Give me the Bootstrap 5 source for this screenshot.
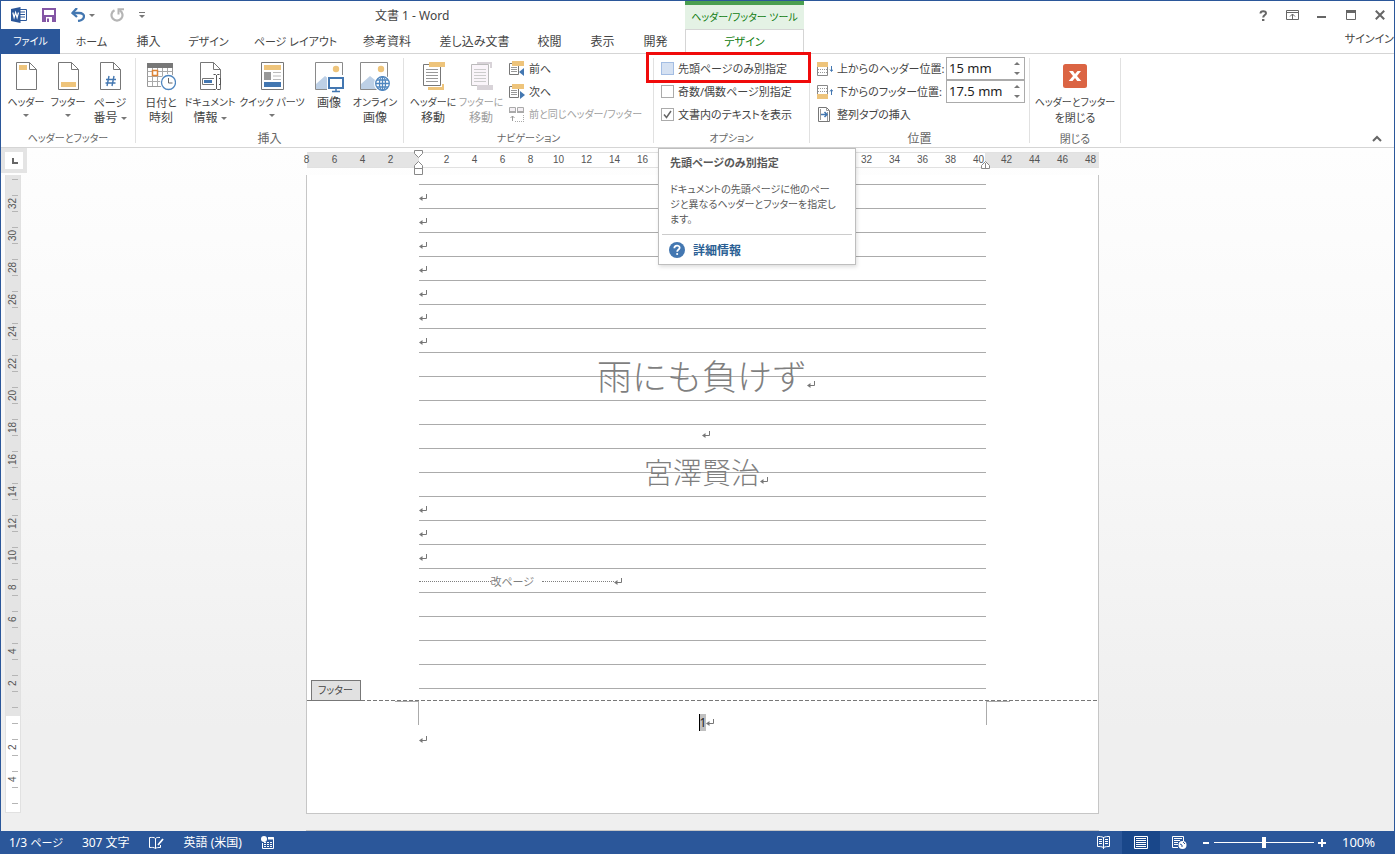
<!DOCTYPE html>
<html lang="ja">
<head>
<meta charset="utf-8">
<meta name="viewport" content="width=device-width, initial-scale=1">
<title>文書 1 - Word</title>
<link href="https://cdn.jsdelivr.net/npm/bootstrap@5.3.0/dist/css/bootstrap.min.css" rel="stylesheet">
<style>
:root{--blue:#2b579a;--line:#d5d5d5;--ink:#444}
body{font-family:"Noto Sans","Noto Sans CJK JP",sans-serif;font-size:12px;line-height:15px;color:var(--ink);font-feature-settings:"palt";background:#fff;border:1px solid var(--blue);border-bottom:0}
button,input{font-family:inherit;font-feature-settings:inherit;color:inherit}
button{background:none;border:0;padding:0}
a{color:inherit;text-decoration:none}
svg{display:block;flex:none}
.kana{font-size:10px}
.kana-m{font-size:11px}
/* header */
.head-left{width:684px}
.title-row{height:28px}
.tab-row{height:25px;border-bottom:1px solid var(--line)}
.tab-grid{display:grid;grid-template-columns:59px 63px 51px 69px 105px 78px 97px 53px 53px 53px}
.tab-grid a{line-height:25px;text-align:center;white-space:nowrap}
.tab-grid .file-tab{background:var(--blue);color:#fff;height:25px}
.quick{width:160px;padding-left:10px;gap:15px}
.doc-title{padding-left:214px}
.ctx{width:119px;color:#107c10}
.ctx-label{height:28px;border-top:4px solid #4a9f50;background:#e4f2e5;line-height:24px}
.ctx-tab{height:25px;border:1px solid var(--line);border-bottom:0;line-height:24px}
.win-btn{width:29px;height:28px}
.signin{line-height:19px}
/* ribbon */
.ribbon{height:94px;border-bottom:1px solid var(--line)}
.rib-sep{width:1px;margin:4px 0;background:#e1e1e1}
.rib-body{height:76px}
.rib-cap{height:17px;line-height:17px;color:#666}
.cols{display:grid;padding-top:7px}
.g-hf{width:134px}.g-hf .cols{grid-template-columns:repeat(3,42px);padding-left:4px}
.g-ins{width:267px}.g-ins .cols{grid-template-columns:40px 58px 66px 48px 44px;padding-left:5px}
.g-nav{width:249px}.g-nav .cols{grid-template-columns:48px 48px;padding-left:5px}
.g-opt{width:155px}.g-pos{width:219px}.g-close{width:90px}
.big{display:flex;flex-direction:column;align-items:center;white-space:nowrap;line-height:15px}
.big .ic{margin-bottom:4px}
.big .ic.tall{margin-bottom:2px}
.caret{display:inline-block;border:3px solid transparent;border-top-color:#777;border-bottom:0;vertical-align:middle}
.rows{padding-top:3px}
.rows>*{height:23px}
.off{color:#a0a0a0}
.tick{appearance:none;width:13px;height:13px;margin:0;border:1px solid #ababab;background:#fff;flex:none}
.tick.hot{background:#d5e1f2;border-color:#a3bde3}
.tick:checked{background:url("data:image/svg+xml,%3Csvg xmlns='http://www.w3.org/2000/svg' viewBox='0 0 11 11'%3E%3Cpath d='M2 5.5l2.5 3L9 2' fill='none' stroke='%23666' stroke-width='1.5'/%3E%3C/svg%3E")}
.pad7{padding-left:7px}
.frame{position:absolute;left:-8px;top:-2px;width:165px;height:31px;border:3px solid #f00b0b;pointer-events:none;z-index:3}
.spin{width:79px;border:1px solid #ababab;height:23px}
.spin input{width:62px;border:0;padding:0 2px;font-size:13px;outline:0;color:#222}
.spin button{height:10px;width:15px}
.tip{position:absolute;left:4px;top:94px;width:198px;background:#fff;border:1px solid #bebebe;box-shadow:1px 2px 4px #0002;z-index:5;padding:6px 3px;color:#595959}
.tip hr{margin:7px 0;border-color:#ccc;opacity:1}
.tip-link{color:#2b5f94}
/* workspace */
.work{background:linear-gradient(#fefefe,#f7f7f7 45%,#efefef 85%);overflow:hidden;position:relative}
.ruler-row{height:27px;padding:4px 11px 0 21px}
.corner{position:absolute;left:0;top:0;width:26px;height:25px;border:4px solid #e4e4e4;background:#fff}
.hruler{width:792px;height:16px;position:relative;border:1px solid #e1e1e1;border-width:1px 0;background:linear-gradient(90deg,#e4e4e4 112px,#fff 112px 678px,#e4e4e4 678px)}
.nums{display:grid;grid-template-columns:repeat(29,28px);margin-left:-14px;width:812px;font:10px/14px "Liberation Sans",sans-serif;text-align:center;color:#555}
.nums .after-tip{grid-column:21}
.m-left{position:absolute;left:107px;top:-3px}
.m-right{position:absolute;left:674px;top:7px}
.vruler{width:16px;height:638px;margin-left:4px;overflow:hidden;border:1px solid #e1e1e1;border-top:0;background:linear-gradient(#e4e4e4 541px,#fff 541px)}
.vnums{margin-top:-20px}
.vnums span{display:flex;justify-content:center;align-items:center;height:32px;width:14px;writing-mode:vertical-rl;transform:rotate(180deg);font:10px/12px "Liberation Sans",sans-serif;color:#555;background:linear-gradient(#b5b5b5,#b5b5b5) 2px 7px/6px 1px no-repeat,linear-gradient(#b5b5b5,#b5b5b5) 2px 23px/6px 1px no-repeat}
.pages{padding-right:11px}
.sheet{width:793px;border:1px solid #c6c6c6;background:#fff}
.sheet.first{height:639px;border-top:0}
.ruled{margin:0 112px;height:525px;padding-top:10px;color:#7f7f7f;background:repeating-linear-gradient(transparent 0 9px,#ababab 9px 10px,transparent 10px 24px)}
.ln{height:24px;display:flex;align-items:center}
.ln2{height:48px;display:flex;align-items:center}
.mid{justify-content:center;padding-left:8px}
.ln2 svg{margin-top:14px}
.ln.mid{padding-bottom:6px}
.big-title{font-size:35px;line-height:48px;font-weight:300;font-feature-settings:normal}
.author{font-size:29px;line-height:48px;font-weight:300;font-feature-settings:normal}
.dots{width:72px;border-top:1px dotted #7f7f7f}
.foot{height:113px;position:relative;background:repeating-linear-gradient(90deg,#777 0 4px,#fff 4px 6px) 0 0/100% 1px no-repeat}
.foot-tag{position:absolute;left:4px;bottom:100%;height:21px;width:50px;margin-bottom:-1px;border:1px solid #777;background:#e1e1e1;line-height:19px;text-align:center}
.crop-l,.crop-r{position:absolute;top:1px;width:24px;height:24px;border-top:1px solid #ababab}
.crop-l{left:88px;border-right:1px solid #ababab}
.crop-r{right:88px;border-left:1px solid #ababab}
.foot-text{padding:14px 112px 0}
.pageno{background:#c0c0c0;border-left:1px solid #000;color:#222;height:17px;line-height:17px;width:7px;font-size:12px}
/* status bar */
.status{height:23px;background:var(--blue);color:#fff;padding-left:8px}
.status-left{gap:19px}
.view-btn{width:38px;height:23px}
.view-btn.on{background:#19478a}
.zoom-bar{appearance:none;width:100px;height:11px;margin:0;background:linear-gradient(#fff,#fff) 0 5px/100% 1px no-repeat}
.zoom-bar::-webkit-slider-thumb{appearance:none;width:4px;height:11px;background:#fff}
.pct{font-size:13px;width:52px}
</style>
</head>
<body class="vh-100 d-flex flex-column overflow-hidden">
<svg width="0" height="0" class="position-absolute">
<symbol id="ret" viewBox="0 0 8 9"><path d="M7.500 1v4.500H1" fill="none" stroke="#777"/><path d="M0 5.500L3.500 3v5z" fill="#777"/></symbol>
<symbol id="sheetic" viewBox="0 0 30 30"><path d="M5.500 1.500h13l7 7v20h-20z" fill="#fff" stroke="#777"/><path d="M18.500 1.500v7h7" fill="none" stroke="#777"/></symbol>
<symbol id="pic" viewBox="0 0 30 30"><path d="M1.500 1.500h27v27h-27z" fill="#fff" stroke="#8a8a8a"/><path d="M2 28v-5l9-8 5 4 4-1v10z" fill="#bdd0e6"/><circle cx="22" cy="8" r="3.200" fill="#eec47b"/></symbol>
</svg>

<header class="d-flex flex-shrink-0">
  <div class="head-left flex-shrink-0">
    <div class="title-row d-flex align-items-center">
      <div class="quick d-flex align-items-center">
        <svg width="16" height="16" viewBox="0 0 16 16"><path d="M8.500 2.500h7v11h-7z" fill="#fff" stroke="#2b579a"/><path d="M9 5h5M9 7.500h5M9 10h5" stroke="#2b579a"/><path d="M0 2l9.500-2v16L0 14z" fill="#2b579a"/><path d="M1.800 5.500l1.300 5 1.500-5 1.500 5 1.400-5" fill="none" stroke="#fff" stroke-width="1.200"/></svg>
        <button aria-label="上書き保存"><svg width="14" height="14" viewBox="0 0 14 14"><path d="M1 1h12v12H1z" fill="#fff" stroke="#8456a5" stroke-width="2"/><path d="M1 7h12v6H1z" fill="#8456a5"/><path d="M4 9h6v5H4z" fill="#fff"/><path d="M5 10.500h2V14H5z" fill="#8456a5"/></svg></button>
        <button aria-label="元に戻す" class="d-flex align-items-center gap-1"><svg width="14" height="14" viewBox="0 0 14 14"><path d="M1.500 5H8c7 0 6.500 7-1 8" fill="none" stroke="#4377b1" stroke-width="2.300"/><path d="M6 0L1.500 5 6 9" fill="none" stroke="#4377b1" stroke-width="2.300"/></svg><span class="caret"></span></button>
        <button aria-label="やり直し"><svg width="14" height="14" viewBox="0 0 14 14"><path d="M4.500 2.200a5.500 5.500 0 1 0 5 0" fill="none" stroke="#b5b5b5" stroke-width="2.200"/><path d="M8.500 6.500V1.200H14" fill="none" stroke="#b5b5b5" stroke-width="2"/></svg></button>
        <button aria-label="クイック アクセス ツール バーのカスタマイズ"><svg width="6" height="8" viewBox="0 0 6 8"><path d="M0 1.500h6" stroke="#777"/><path d="M0 4h6L3 7z" fill="#777"/></svg></button>
      </div>
      <div class="doc-title">文書 1 - Word</div>
    </div>
    <nav class="tab-row tab-grid">
      <a href="#" class="file-tab kana">ファイル</a><a href="#" class="kana-m">ホーム</a><a href="#">挿入</a><a href="#" class="kana-m">デザイン</a><a href="#" class="kana-m">ページ レイアウト</a><a href="#">参考資料</a><a href="#">差し込み文書</a><a href="#">校閲</a><a href="#">表示</a><a href="#">開発</a>
    </nav>
  </div>
  <div class="ctx text-center flex-shrink-0 text-nowrap">
    <div class="ctx-label kana">ヘッダー/フッター ツール</div>
    <a href="#" class="ctx-tab d-block kana-m">デザイン</a>
  </div>
  <div class="flex-grow-1">
    <div class="title-row d-flex justify-content-end">
      <button class="win-btn" aria-label="ヘルプ"><svg class="mx-auto" width="9" height="11" viewBox="0 0 9 11"><path d="M1.500 3.500C1.500.500 7 .500 7 3.200 7 5 4.200 5 4.200 7.500" fill="none" stroke="#666" stroke-width="2"/><path d="M3 9h2.400v2H3z" fill="#666"/></svg></button>
      <button class="win-btn" aria-label="リボンの表示オプション"><svg class="mx-auto" width="14" height="11" viewBox="0 0 14 11"><path d="M.500.500h12v9H.500zM.500 2.500h12M6.500 9V4M4 6.500L6.500 4 9 6.500" fill="none" stroke="#666"/></svg></button>
      <button class="win-btn" aria-label="最小化"><svg class="mx-auto" width="9" height="11" viewBox="0 0 9 11"><path d="M0 7h9" stroke="#666" stroke-width="2"/></svg></button>
      <button class="win-btn" aria-label="最大化"><svg class="mx-auto" width="10" height="10" viewBox="0 0 10 10"><path d="M.500 1h9v8.500h-9z" fill="none" stroke="#666"/><path d="M0 1.500h10" stroke="#666" stroke-width="3"/></svg></button>
      <button class="win-btn" aria-label="閉じる"><svg class="mx-auto" width="10" height="10" viewBox="0 0 10 10"><path d="M.800.800l8.400 8.400M9.200.800L.800 9.200" stroke="#666" stroke-width="2"/></svg></button>
    </div>
    <div class="tab-row text-end"><a href="#" class="signin kana-m">サインイン</a></div>
  </div>
</header>

<section class="ribbon d-flex flex-shrink-0">
  <div class="g-hf">
    <div class="rib-body cols">
      <button class="big"><svg class="ic" width="30" height="30" viewBox="0 0 30 30"><use href="#sheetic"/><path d="M8 4h8v5H8z" fill="#eec47b"/></svg><span class="kana">ヘッダー</span><span class="caret mt-1"></span></button>
      <button class="big"><svg class="ic" width="30" height="30" viewBox="0 0 30 30"><use href="#sheetic"/><path d="M8 21h15v5H8z" fill="#eec47b"/></svg><span class="kana">フッター</span><span class="caret mt-1"></span></button>
      <button class="big"><svg class="ic" width="30" height="30" viewBox="0 0 30 30"><use href="#sheetic"/><path d="M14 15l-2 10M19 15l-2 10M11 18.500h10M10.500 22h10" stroke="#4377b1" stroke-width="1.400"/></svg><span class="kana-m">ページ</span><span>番号 <span class="caret"></span></span></button>
    </div>
    <div class="rib-cap text-center kana">ヘッダーとフッター</div>
  </div>
  <div class="rib-sep"></div>
  <div class="g-ins">
    <div class="rib-body cols">
      <button class="big"><svg class="ic" width="30" height="30" viewBox="0 0 30 30"><path d="M1.500 3.500h25v22h-25z" fill="#fff" stroke="#999"/><path d="M1.500 10.500h25M1.500 15.500h25M1.500 20.500h25M6.500 6v19M11.500 6v19M16.500 6v19M21.500 6v19" stroke="#aaa"/><path d="M1 2h26v5H1z" fill="#777"/><path d="M6.500 9.500h5v5h-5z" fill="#fff" stroke="#dd8436" stroke-width="1.500"/><circle cx="22.500" cy="21.500" r="8.500" fill="#fff"/><circle cx="22.500" cy="21.500" r="7" fill="#fff" stroke="#4f86bf" stroke-width="1.300"/><path d="M22.500 17v5h4" fill="none" stroke="#666"/></svg><span class="kana-m">日付と</span><span>時刻</span></button>
      <button class="big"><svg class="ic" width="30" height="30" viewBox="0 0 30 30"><use href="#sheetic"/><path d="M7.500 17.500h14v6h-14z" fill="#fff" stroke="#777"/><path d="M9 19h8v3H9z" fill="#4377b1"/><path d="M19 12h4v17h-4z" fill="#fff"/><path d="M18.500 13.500h2l1 1 1-1h2M21.500 14v14M18.500 28.500h2l1-1 1 1h2M24 17.500h1.500v6H24" fill="none" stroke="#555"/></svg><span class="kana">ドキュメント</span><span>情報 <span class="caret"></span></span></button>
      <button class="big"><svg class="ic" width="30" height="30" viewBox="0 0 30 30"><path d="M4.500 1.500h22v27h-22z" fill="#fff" stroke="#777"/><path d="M7 4h17v5H7z" fill="#eec47b"/><path d="M7 11h7v8H7z" fill="#999"/><path d="M16 11.500h8M16 15h8M16 18.500h8" stroke="#bbb"/><path d="M7 21h17v5H7z" fill="#4377b1"/></svg><span class="kana">クイック パーツ</span><span class="caret mt-1"></span></button>
      <button class="big"><svg class="ic tall" width="30" height="32" viewBox="0 0 30 32"><use href="#pic" width="30" height="30"/><path d="M13 14h17v18H13z" fill="#fff"/><path d="M15 17h14v10H15z" fill="#fff" stroke="#4377b1" stroke-width="2"/><path d="M22 28v2M18 30.500h8" stroke="#4377b1" stroke-width="1.500"/></svg>画像</button>
      <button class="big"><svg class="ic" width="32" height="30" viewBox="0 0 32 30"><use href="#pic" width="30" height="30"/><circle cx="23.500" cy="22.500" r="8.500" fill="#fff"/><g fill="none" stroke="#4f86bf" stroke-width="1.300"><circle cx="23.500" cy="22.500" r="6.800"/><ellipse cx="23.500" cy="22.500" rx="3" ry="6.800"/><path d="M23.500 15.500v14M17 22.500h13M18 19h11M18 26h11"/></g></svg><span class="kana">オンライン</span><span>画像</span></button>
    </div>
    <div class="rib-cap text-center">挿入</div>
  </div>
  <div class="rib-sep"></div>
  <div class="g-nav">
    <div class="d-flex rib-body">
      <div class="cols">
        <button class="big"><svg class="ic" width="30" height="30" viewBox="0 0 30 30"><path d="M5.500 3.500h17v21h-17z" fill="#fff" stroke="#777"/><path d="M8 8.500h12M8 11.500h12M8 14.500h12M8 17.500h12M8 20.500h12" stroke="#999"/><path d="M11 1h16v5H11zM10 26h14v-3h2v6H10z" fill="#eec47b"/></svg><span class="kana">ヘッダーに</span><span>移動</span></button>
        <button class="big off"><svg class="ic" width="30" height="30" viewBox="0 0 30 30"><path d="M5.500 3.500h17v21h-17z" fill="#faf5fa" stroke="#bbb"/><path d="M8 8.500h12M8 11.500h12M8 14.500h12M8 17.500h12M8 20.500h12" stroke="#ccc"/><path d="M11 1h15v6h-2V3H11zM11 24h16v5H11z" fill="#d8d3d8"/></svg><span class="kana">フッターに</span><span>移動</span></button>
      </div>
      <div class="rows text-nowrap ps-1">
        <button class="d-flex align-items-center gap-1 kana-m"><svg width="16" height="16" viewBox="0 0 16 16"><path d="M.500 2.500h9v11h-9z" fill="#fff" stroke="#777"/><path d="M2 6.500h6M2 8.500h6M2 10.500h6" stroke="#999"/><path d="M3 0h12v5H3z" fill="#eec47b"/><path d="M15 7v8l-5-4z" fill="#4377b1"/></svg>前へ</button>
        <button class="d-flex align-items-center gap-1 kana-m"><svg width="16" height="16" viewBox="0 0 16 16"><path d="M.500 2.500h9v11h-9z" fill="#fff" stroke="#777"/><path d="M2 6.500h6M2 8.500h6M2 10.500h6" stroke="#999"/><path d="M3 0h12v5H3z" fill="#eec47b"/><path d="M11 7v8l5-4z" fill="#4377b1"/></svg>次へ</button>
        <button class="d-flex align-items-center gap-1 off kana"><svg width="16" height="16" viewBox="0 0 16 16"><path d="M.500 5V.500h6V5M8.500 5V.500h6V5" fill="#f4f0f4" stroke="#aaa"/><path d="M0 5h7M8 5h7" stroke="#aaa" stroke-width="2"/><path d="M3.500 14V9M1.500 11l2-2 2 2" fill="none" stroke="#999"/><path d="M6 14.500h9M14.500 8v7" stroke="#aaa" stroke-dasharray="1 1"/></svg>前と同じヘッダー/フッター</button>
      </div>
    </div>
    <div class="rib-cap text-center kana">ナビゲーション</div>
  </div>
  <div class="rib-sep"></div>
  <div class="g-opt position-relative">
    <span class="frame"></span>
    <div class="rib-body rows pad7 text-nowrap kana-m">
      <label class="d-flex align-items-center gap-1"><input type="checkbox" class="tick hot">先頭ページのみ別指定</label>
      <label class="d-flex align-items-center gap-1"><input type="checkbox" class="tick">奇数/偶数ページ別指定</label>
      <label class="d-flex align-items-center gap-1"><input type="checkbox" class="tick" checked>文書内のテキストを表示</label>
    </div>
    <div class="rib-cap text-center kana">オプション</div>
    <div class="tip" role="tooltip">
      <div class="fw-bold px-2 mb-2 kana-m">先頭ページのみ別指定</div>
      <div class="px-2 kana text-nowrap pt-1">ドキュメントの先頭ページに他のペー<br>ジと異なるヘッダーとフッターを指定し<br>ます。</div>
      <hr>
      <a href="#" class="tip-link fw-bold d-flex align-items-center gap-2 pad7"><svg width="16" height="16" viewBox="0 0 18 18"><circle cx="9" cy="9" r="9" fill="#4377b1"/><path d="M6 7c0-4 6-3.800 6-.500C12 8.500 9.200 8.500 9.200 11" fill="none" stroke="#fff" stroke-width="2"/><path d="M8.200 12.500h2v2h-2z" fill="#fff"/></svg>詳細情報</a>
    </div>
  </div>
  <div class="rib-sep"></div>
  <div class="g-pos">
    <div class="rib-body rows pad7 text-nowrap">
      <div class="d-flex align-items-center"><label for="hpos" class="d-flex align-items-center gap-1 flex-grow-1 kana-m"><svg width="16" height="16" viewBox="0 0 16 16"><path d="M.500 1v13.500h10V1" fill="#fff" stroke="#888"/><path d="M0 1h11v5H0z" fill="#eec47b"/><path d="M1 8.500h10M1 11.500h10" stroke="#999" stroke-dasharray="1 1"/><path d="M14.500 5v5M13 8.500l1.500 2L16 8.500" fill="none" stroke="#4377b1"/></svg>上からのヘッダー位置:</label>
        <div class="spin d-flex me-1"><input id="hpos" type="text" value="15 mm"><div class="d-flex flex-column"><button aria-label="増やす"><svg class="mx-auto" width="6" height="3" viewBox="0 0 6 3"><path d="M0 3h6L3 0z" fill="#777"/></svg></button><button aria-label="減らす"><svg class="mx-auto" width="6" height="3" viewBox="0 0 6 3"><path d="M0 0h6L3 3z" fill="#777"/></svg></button></div></div></div>
      <div class="d-flex align-items-center"><label for="fpos" class="d-flex align-items-center gap-1 flex-grow-1 kana-m"><svg width="16" height="16" viewBox="0 0 16 16"><path d="M.500 14V1.500h10V14" fill="#fff" stroke="#888"/><path d="M0 10h11v5H0z" fill="#eec47b"/><path d="M1 4.500h10M1 7.500h10" stroke="#999" stroke-dasharray="1 1"/><path d="M14.500 11V6M13 7.500l1.500-2L16 7.500" fill="none" stroke="#4377b1"/></svg>下からのフッター位置:</label>
        <div class="spin d-flex me-1"><input id="fpos" type="text" value="17.5 mm"><div class="d-flex flex-column"><button aria-label="増やす"><svg class="mx-auto" width="6" height="3" viewBox="0 0 6 3"><path d="M0 3h6L3 0z" fill="#777"/></svg></button><button aria-label="減らす"><svg class="mx-auto" width="6" height="3" viewBox="0 0 6 3"><path d="M0 0h6L3 3z" fill="#777"/></svg></button></div></div></div>
      <button class="d-flex align-items-center gap-1 kana-m"><svg width="16" height="16" viewBox="0 0 16 16"><path d="M1.500.500h8l3 3v11h-11z" fill="#fff" stroke="#777"/><path d="M3.500 2v11M9.500.500v3h3M10.500 5v9" fill="none" stroke="#999"/><path d="M4 7.500h6M7.500 5l2.500 2.500L7.500 10" fill="none" stroke="#4377b1" stroke-width="1.500"/></svg>整列タブの挿入</button>
    </div>
    <div class="rib-cap text-center">位置</div>
  </div>
  <div class="rib-sep"></div>
  <div class="g-close">
    <div class="rib-body cols">
      <button class="big"><svg class="ic" width="30" height="30" viewBox="0 0 30 30"><rect x="3" y="3" width="24" height="24" rx="2.500" fill="#db6443"/><path d="M9 10h4l2 3 2.500-3H21l-4 5 4.300 5H17.200L15 17l-2.500 3H8.700l4.300-5z" fill="#fff"/></svg><span class="kana">ヘッダーとフッター</span><span class="kana-m">を閉じる</span></button>
    </div>
    <div class="rib-cap text-center kana-m">閉じる</div>
  </div>
  <div class="rib-sep"></div>
  <button class="ms-auto align-self-end pe-2 pb-1 me-1" aria-label="リボンを折りたたむ"><svg width="10" height="8" viewBox="0 0 10 8"><path d="M1 6l4-4 4 4" fill="none" stroke="#666" stroke-width="2"/></svg></button>
</section>

<main class="work flex-grow-1">
  <div class="corner"><svg width="18" height="17" viewBox="0 0 18 17"><path d="M8 6v5h5" fill="none" stroke="#666" stroke-width="2"/></svg></div>
  <div class="ruler-row">
    <div class="hruler mx-auto">
      <div class="nums"><span>8</span><span>6</span><span>4</span><span>2</span><span></span><span>2</span><span>4</span><span>6</span><span>8</span><span>10</span><span>12</span><span>14</span><span>16</span><span class="after-tip">32</span><span>34</span><span>36</span><span>38</span><span>40</span><span>42</span><span>44</span><span>46</span><span>48</span></div>
      <svg class="m-left" width="10" height="26" viewBox="0 0 10 26"><path d="M.500.500h8v3l-4 4-4-4zM.500 18.500v-3l4-4 4 4v3zM.500 18.500h8v6h-8z" fill="#fff" stroke="#888"/></svg>
      <svg class="m-right" width="10" height="10" viewBox="0 0 10 10"><path d="M.500 8.500v-3l4-4 4 4v3z" fill="#fff" stroke="#888"/><path d="M4.500 3v6" stroke="#888"/></svg>
    </div>
  </div>
  <div class="d-flex">
    <div class="vruler flex-shrink-0"><div class="vnums"><span></span><span>32</span><span>30</span><span>28</span><span>26</span><span>24</span><span>22</span><span>20</span><span>18</span><span>16</span><span>14</span><span>12</span><span>10</span><span>8</span><span>6</span><span>4</span><span>2</span><span></span><span>2</span><span>4</span><span></span></div></div>
    <div class="pages flex-grow-1">
      <article class="sheet first mx-auto">
        <div class="ruled">
          <div class="ln"><svg width="8" height="9"><use href="#ret"/></svg></div>
          <div class="ln"><svg width="8" height="9"><use href="#ret"/></svg></div>
          <div class="ln"><svg width="8" height="9"><use href="#ret"/></svg></div>
          <div class="ln"><svg width="8" height="9"><use href="#ret"/></svg></div>
          <div class="ln"><svg width="8" height="9"><use href="#ret"/></svg></div>
          <div class="ln"><svg width="8" height="9"><use href="#ret"/></svg></div>
          <div class="ln"><svg width="8" height="9"><use href="#ret"/></svg></div>
          <div class="ln2 mid big-title">雨にも負けず<svg width="8" height="9"><use href="#ret"/></svg></div>
          <div class="ln"></div>
          <div class="ln mid"><svg width="8" height="9"><use href="#ret"/></svg></div>
          <div class="ln2 mid author">宮澤賢治<svg width="8" height="9"><use href="#ret"/></svg></div>
          <div class="ln"><svg width="8" height="9"><use href="#ret"/></svg></div>
          <div class="ln"><svg width="8" height="9"><use href="#ret"/></svg></div>
          <div class="ln"><svg width="8" height="9"><use href="#ret"/></svg></div>
          <div class="ln kana-m"><span class="dots"></span>改ページ<span class="dots ms-2"></span><svg width="8" height="9"><use href="#ret"/></svg></div>
        </div>
        <div class="foot">
          <span class="foot-tag kana">フッター</span><span class="crop-l"></span><span class="crop-r"></span>
          <div class="foot-text">
            <div class="d-flex mid align-items-center"><span class="pageno">1</span><svg width="8" height="9"><use href="#ret"/></svg></div>
            <div class="d-flex pt-1"><svg width="8" height="9"><use href="#ret"/></svg></div>
          </div>
        </div>
      </article>
      <div class="sheet mx-auto mt-3 pb-3"></div>
    </div>
  </div>
</main>

<footer class="status d-flex align-items-center flex-shrink-0 text-nowrap">
  <div class="status-left d-flex align-items-center">
    <span>1/3 <span class="kana-m">ページ</span></span>
    <span>307 文字</span>
    <button aria-label="文章校正"><svg width="16" height="14" viewBox="0 0 16 14"><path d="M6.500 12.500V2.500C5 1 3 1.500.500 1.500v10c2.500 0 4-.500 6 1 1-1 3-1 5-1V9M6.500 2.500C8 1 9.500 1.500 11 1.500" fill="none" stroke="#fff"/><path d="M14 3L9 9" stroke="#fff" stroke-width="1.800"/></svg></button>
    <span>英語 (米国)</span>
    <button aria-label="マクロの記録"><svg width="14" height="13" viewBox="0 0 14 13"><circle cx="3" cy="3" r="3" fill="#fff"/><path d="M7 1.500h5.500v11h-11V7" fill="none" stroke="#fff"/><path d="M7 2.500h6" stroke="#fff" stroke-width="2"/><path d="M3 6.500h8M3 8.500h8M3 10.500h8" stroke="#fff" stroke-dasharray="2 1"/></svg></button>
  </div>
  <div class="ms-auto d-flex align-items-center">
    <button class="view-btn" aria-label="閲覧モード"><svg class="mx-auto" width="13" height="13" viewBox="0 0 13 13"><path d="M.500.500c2 0 4 0 6 1 2-1 4-1 6-1v10c-2 0-4 0-6 1-2-1-4-1-6-1zM6.500 1v12M2 3.500h3M2 5.500h3M2 7.500h3M8 3.500h3M8 5.500h3M8 7.500h3" fill="none" stroke="#fff"/></svg></button>
    <button class="view-btn on" aria-label="印刷レイアウト"><svg class="mx-auto" width="14" height="13" viewBox="0 0 14 13"><path d="M.500.500h13v12H.500zM2 2.500h10M2 4.500h10M2 6.500h10M2 8.500h10M2 10.500h10" fill="none" stroke="#fff"/></svg></button>
    <button class="view-btn" aria-label="Web レイアウト"><svg class="mx-auto" width="15" height="13" viewBox="0 0 15 13"><path d="M6 11.500H.500V.500h11V5M2 2.500h8M2 4.500h6M2 6.500h4M2 8.500h4" fill="none" stroke="#fff"/><circle cx="10.500" cy="9" r="4" fill="#fff"/><path d="M8 8l2 1v2M11 6l2 2" fill="none" stroke="#2b579a"/></svg></button>
    <button class="ms-1 me-1" aria-label="縮小"><svg width="8" height="10" viewBox="0 0 8 10"><path d="M1 5h6" stroke="#fff" stroke-width="2"/></svg></button>
    <input type="range" class="zoom-bar" min="0" max="100" value="50" aria-label="ズーム">
    <button class="ms-1 me-3" aria-label="拡大"><svg width="8" height="10" viewBox="0 0 8 10"><path d="M0 5h8M4 1v8" stroke="#fff" stroke-width="2"/></svg></button>
    <span class="pct">100%</span>
  </div>
</footer>
<script src="https://cdn.jsdelivr.net/npm/bootstrap@5.3.0/dist/js/bootstrap.bundle.min.js"></script>
</body>
</html>
